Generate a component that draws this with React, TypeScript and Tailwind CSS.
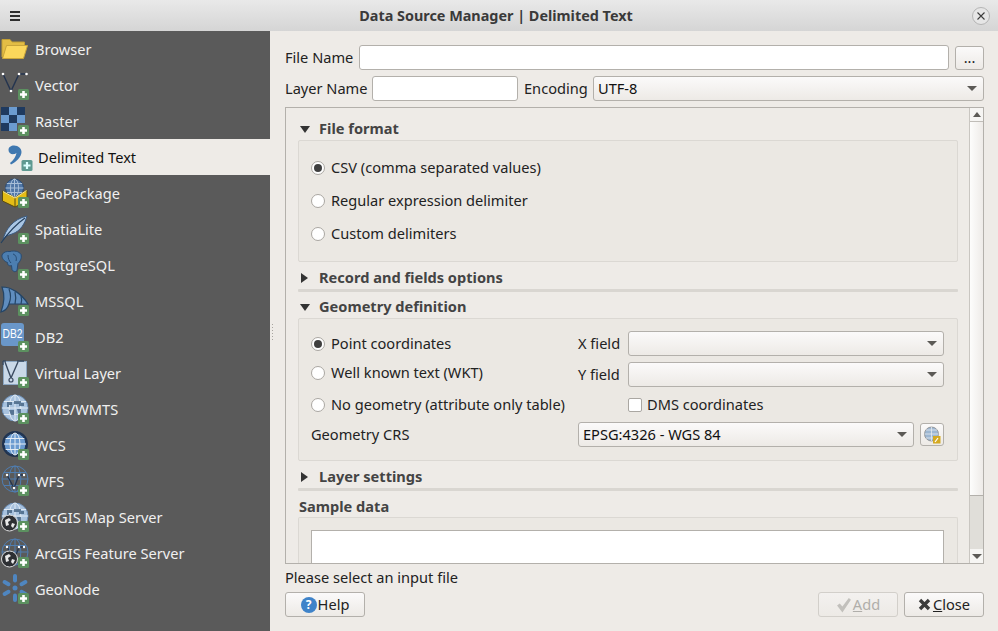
import type { ReactNode } from "react"

const Plus = () => (
  <g>
    <rect x="18" y="22" width="11" height="11" rx="1.5" fill="#5c9160" />
    <path d="M23.5 24v7M20 27.500h7" stroke="#fff" strokeWidth="2.600" />
  </g>
)

const Globe = ({ cx = 15, cy = 17, r = 13, fill = "#7fa3cc", line = "#dfe9f3", edge = "#4a74a8" }) => (
  <g>
    <circle cx={cx} cy={cy} r={r} fill={fill} stroke={edge} strokeWidth="1" />
    <ellipse cx={cx} cy={cy} rx={r * 0.45} ry={r} fill="none" stroke={line} strokeWidth="1" />
    <path d={`M${cx - r} ${cy}h${r * 2}M${cx} ${cy - r}v${r * 2}M${cx - r * 0.85} ${cy - r * 0.5}h${r * 1.7}M${cx - r * 0.85} ${cy + r * 0.5}h${r * 1.7}`} stroke={line} strokeWidth="1" />
  </g>
)

const VShape = () => (
  <g>
    <path d="M7 12l7 13 5-13h5" fill="none" stroke="#24344f" strokeWidth="1.3" />
    <circle cx="7" cy="12" r="1.2" fill="#fff" />
    <circle cx="14" cy="25" r="1.2" fill="#fff" />
    <circle cx="19" cy="12" r="1.2" fill="#fff" />
    <circle cx="24" cy="12" r="1.2" fill="#fff" />
  </g>
)

const MapBlots = () => (
  <path d="M7 11h5v3H9v2H7zM14 10h7v2h3v3h-5v-2h-5zM9 19h5v5h-3zM17 18h4v4h-3z" fill="#41607f" opacity="0.8" />
)

const SmallGlobe = () => (
  <g>
    <circle cx="9.500" cy="24" r="8" fill="#2d2f33" stroke="#ddd" strokeWidth="1" />
    <path d="M5 21l4-2 2 2-3 2 1 3-3 1zM12 24l3 1-2 4-2-2z" fill="#e8e8e8" />
  </g>
)

const icons: Record<string, ReactNode> = {
  Browser: (
    <>
      <path d="M2 26V8.500h8l2 2.500h12.500v4" fill="#e3bd45" stroke="#c29f35" strokeWidth="1" />
      <path d="M2.500 27.500l4-13h21l-4 13z" fill="#fbd75b" stroke="#c9a53a" strokeWidth="1" />
    </>
  ),
  Vector: (
    <>
      <path d="M3 7l8 17 8-17h8" fill="none" stroke="#24344f" strokeWidth="1.400" />
      <circle cx="3" cy="7" r="1.300" fill="#fff" />
      <circle cx="11" cy="24" r="1.300" fill="#fff" />
      <circle cx="19" cy="7" r="1.300" fill="#fff" />
      <circle cx="26.500" cy="7" r="1.300" fill="#fff" />
      <Plus />
    </>
  ),
  Raster: (
    <>
      <path d="M1 4h8v8H1zM17 4h8v8h-8zM9 12h8v8H9zM1 20h8v8H1z" fill="#1f3a5f" />
      <path d="M9 4h8v8H9zM1 12h8v8H1zM17 12h8v8h-8zM9 20h8v8H9z" fill="#6b9bd0" />
      <Plus />
    </>
  ),
  "Delimited Text": (
    <>
      <path d="M5.500 11C5.500 8 8 6.500 11 6.500c4.500 0 7.500 3 7.500 6.500 0 5-5.500 10-10.500 12.500L7 24c3.500-3 6-6.500 6.500-10-1 .8-2.500 1.200-3.500 1.200-2.500 0-4.500-1.700-4.500-4.200z" fill="#3f78b0" />
      <rect x="18.500" y="21" width="11" height="11" rx="1.500" fill="#5f9a91" />
      <path d="M24 23v7M20.500 26.500h7" stroke="#dff" strokeWidth="2.200" />
    </>
  ),
  GeoPackage: (
    <>
      <Globe cx={14.500} cy={13} r={9} fill="#4f76a6" edge="#2b4a73" line="#a8bfd8" />
      <path d="M2.500 16L15 22.500 27 15v11l-12 6-12.500-6z" fill="#e5bd16" stroke="#5a4c10" strokeWidth="1" />
      <path d="M15 22.500V32" stroke="#5a4c10" strokeWidth="1" />
      <path d="M3 16.500l12 6.500 11.500-7.500" fill="none" stroke="#f8ec9d" strokeWidth="1" />
      <Plus />
    </>
  ),
  SpatiaLite: (
    <>
      <path d="M3 29C5 19 13 8 27 5c-2 7-6 15-15 18l-6 2z" fill="#a9c6e4" stroke="#3a5a80" strokeWidth="1" />
      <path d="M1 32C8 22 15 14 25 7" fill="none" stroke="#24405f" strokeWidth="1.200" />
      <Plus />
    </>
  ),
  PostgreSQL: (
    <>
      <path d="M2 8c1-3 5-4 8-3.500 4-1 9-.5 11 3 1 4-1 7-3 9l-1 7c-2 2-4 1-5-1l-.5-4c-3 1-4-1-4-3-3-1-6-4-5.500-7.500z" fill="#4c7eb0" stroke="#274b73" strokeWidth="1" />
      <path d="M8 8c0 3 1 6 3 8M13 7c3 1 4 4 3 7" fill="none" stroke="#274b73" strokeWidth="1" />
      <Plus />
    </>
  ),
  MSSQL: (
    <>
      <path d="M2 4c9 0 19 6 26 17H9c-1 3-4 7-8 8 3-8 4-17 1-25z" fill="#5f8dbe" stroke="#244566" strokeWidth="1.200" />
      <path d="M9 6c2 5 2 10 0 15M15 9c1 4 1 8 0 12M21 13c1 3 1 5 0 8" fill="none" stroke="#244566" strokeWidth="1.200" />
      <Plus />
    </>
  ),
  DB2: (
    <>
      <rect x="1" y="4" width="23" height="23" rx="3" fill="#6a97c9" />
      <text x="2.500" y="19" fontSize="13" fill="#fff" fontFamily="'Liberation Sans',sans-serif" textLength="20" lengthAdjust="spacingAndGlyphs">DB2</text>
      <Plus />
    </>
  ),
  "Virtual Layer": (
    <>
      <rect x="3.500" y="6.500" width="23" height="23" fill="#c9d8e8" stroke="#8ba6c2" strokeWidth="1" />
      <path d="M5 7l6 16 7-16" fill="none" stroke="#39495f" strokeWidth="1.400" />
      <circle cx="11" cy="25" r="2" fill="#c9d8e8" stroke="#39495f" strokeWidth="1.200" />
      <path d="M3 6h3M17 6h7M3 6v4" stroke="#39495f" strokeWidth="1.300" fill="none" />
      <Plus />
    </>
  ),
  "WMS/WMTS": (
    <>
      <Globe fill="#a8c2de" edge="#6d90b8" line="#dfe9f3" />
      <MapBlots />
      <Plus />
    </>
  ),
  WCS: (
    <>
      <circle cx="15" cy="17" r="13" fill="#1f3350" />
      <Globe r={11} fill="#6b9bd0" edge="#1f3350" line="#e5edf5" />
      <Plus />
    </>
  ),
  WFS: (
    <>
      <Globe cy={16} fill="none" line="#4f7db0" edge="#4f7db0" />
      <VShape />
      <Plus />
    </>
  ),
  "ArcGIS Map Server": (
    <>
      <Globe fill="#a8c2de" edge="#6d90b8" />
      <MapBlots />
      <SmallGlobe />
      <Plus />
    </>
  ),
  "ArcGIS Feature Server": (
    <>
      <Globe fill="none" line="#4f7db0" edge="#4f7db0" />
      <VShape />
      <SmallGlobe />
      <Plus />
    </>
  ),
  GeoNode: (
    <>
      <circle cx="15" cy="17" r="2.500" fill="#4f86c0" />
      {[0, 60, 120, 180, 240, 300].map((a) => (
        <rect key={a} x="13" y="3" width="4" height="8.500" rx="2" fill="#4f86c0" transform={`rotate(${a} 15 17)`} />
      ))}
      <Plus />
    </>
  ),
}

const sources = Object.keys(icons)

function SideItem({ name }: { name: string }) {
  const active = name === "Delimited Text"
  return (
    <div className={`flex h-9 items-center ${active ? "bg-[#eeebe7] pl-[3px] text-[#111]" : "text-[#f0f0f0]"}`}>
      <svg width="32" height="36" viewBox="0 0 32 36" className="shrink-0">
        {icons[name]}
      </svg>
      <span className="ml-[3px] whitespace-nowrap">{name}</span>
    </div>
  )
}

const Arrow = ({ className = "" }: { className?: string }) => (
  <span className={`h-0 w-0 border-x-[5px] border-t-[5px] border-x-transparent border-t-[#5c5a56] ${className}`} />
)

function Select({ value, className = "" }: { value?: string; className?: string }) {
  return (
    <div className={`flex h-[25px] items-center justify-between rounded-[3px] border border-[#b3b0ab] bg-linear-to-b from-[#fbfafa] to-[#edeae6] pl-[4px] pr-[6px] text-[#111] ${className}`}>
      <span className="pb-[2px]">{value}</span>
      <Arrow />
    </div>
  )
}

const TextBox = ({ className = "" }: { className?: string }) => (
  <div className={`h-[25px] rounded-[3px] border border-[#b3b0ab] bg-white ${className}`} />
)

function Radio({ label, checked, className = "" }: { label: string; checked?: boolean; className?: string }) {
  return (
    <div className={`flex items-center whitespace-nowrap text-[#222] ${className}`}>
      <span className="flex h-[14px] w-[14px] items-center justify-center rounded-full border border-[#aaa7a2] bg-white">
        {checked && <span className="h-[8px] w-[8px] rounded-full bg-[#3f3f3f]" />}
      </span>
      <span className="ml-[6px] pb-[2px]">{label}</span>
    </div>
  )
}

function SectionHead({ label, open }: { label: string; open?: boolean }) {
  return (
    <div className="flex h-[22px] items-center font-bold text-[#444]">
      <span className="flex w-[21px] justify-start pl-[2px]">
        {open ? (
          <span className="h-0 w-0 border-x-[5.5px] border-t-[7px] border-x-transparent border-t-[#333]" />
        ) : (
          <span className="ml-[1px] h-0 w-0 border-y-[5.5px] border-l-[7px] border-y-transparent border-l-[#333]" />
        )}
      </span>
      <span className="pb-[2px]">{label}</span>
    </div>
  )
}

const Rule = () => <div className="h-[3px] rounded-[1px] bg-[#d9d6d1]" />

function ActionButton({ children, className = "" }: { children: ReactNode; className?: string }) {
  return (
    <div className={`flex h-[25px] w-[80px] items-center justify-center rounded-[3px] border bg-linear-to-b ${className}`}>
      {children}
    </div>
  )
}

function ScrollBar() {
  return (
    <div className="flex w-[14px] shrink-0 flex-col border-l border-[#c9c6c1]">
      <div className="flex h-[14px] items-center justify-center border-b border-[#c0bdb8] bg-[#f6f5f3]">
        <span className="h-0 w-0 border-x-[4.5px] border-b-[5px] border-x-transparent border-b-[#5c5a56]" />
      </div>
      <div className="h-[374px] border-b border-[#b3b0ab] bg-linear-to-r from-[#fdfdfc] to-[#eeebe8]" />
      <div className="flex-1 bg-[#e0ded9]" />
      <div className="flex h-[14px] items-center justify-center bg-[#f6f5f3]">
        <Arrow className="border-x-[4.5px]" />
      </div>
    </div>
  )
}

export default function App() {
  return (
    <div className="flex h-[631px] w-[998px] flex-col overflow-hidden bg-[#eeebe7] font-['Noto_Sans',sans-serif] text-[14.6px] leading-[20px] text-[#222]">
      <div className="flex h-[31px] shrink-0 items-center justify-between bg-linear-to-b from-[#e9e9e9] to-[#d5d5d5] pl-[10px] pr-[8px]">
        <div className="flex w-[10px] flex-col gap-[2px]">
          <span className="h-[2px] bg-[#2e2e2e]" />
          <span className="h-[2px] bg-[#2e2e2e]" />
          <span className="h-[2px] bg-[#2e2e2e]" />
        </div>
        <span className="text-[14.400px] font-bold text-[#3a3a3a]">Data Source Manager | Delimited Text</span>
        <div className="flex h-[18px] w-[18px] items-center justify-center rounded-full border border-[#b5b5b5] bg-[#e6e6e6]">
          <svg width="10" height="10" viewBox="0 0 10 10">
            <path d="M1.500 1.500l7 7M8.500 1.500l-7 7" stroke="#3c3c3c" strokeWidth="1.100" />
          </svg>
        </div>
      </div>

      <div className="flex min-h-0 flex-1">
        <div className="w-[270px] shrink-0 bg-[#5a5a5a]">
          {sources.map((name) => (
            <SideItem key={name} name={name} />
          ))}
        </div>

        <div className="relative flex min-w-0 flex-1 flex-col pl-[15px] pr-[14px] pt-[14px]">
          {/* splitter grip */}
          <div className="absolute left-[2px] top-[293px] flex flex-col gap-[2px]">
            {[0, 1, 2, 3, 4, 5].map((i) => (
              <span key={i} className="h-[1px] w-[1px] bg-[#a8a5a0]" />
            ))}
          </div>

          <div className="flex h-[25px] items-center">
            <span className="w-[74px] whitespace-nowrap pb-[2px]">File Name</span>
            <TextBox className="flex-1" />
            <div className="ml-[6px] flex h-[24px] w-[29px] items-center justify-center rounded-[3px] border border-[#b3b0ab] bg-linear-to-b from-[#fbfafa] to-[#edeae6] pb-[2px]">
              ...
            </div>
          </div>
          <div className="mt-[6px] flex h-[25px] items-center">
            <span className="w-[87px] whitespace-nowrap pb-[2px]">Layer Name</span>
            <TextBox className="w-[146px]" />
            <span className="ml-[6px] w-[69px] pb-[2px]">Encoding</span>
            <Select value="UTF-8" className="flex-1" />
          </div>

          <div className="mt-[6px] flex h-[457px] overflow-hidden border border-[#b3b0ab]">
            <div className="min-w-0 flex-1 pl-[12px] pr-[11px] pt-[10px]">
              <SectionHead label="File format" open />
              <div className="flex h-[122px] flex-col gap-[13px] rounded-[2px] border border-[#dbd8d3] bg-[#ebe8e3] pl-[12px] pt-[17px]">
                <Radio label="CSV (comma separated values)" checked className="h-[20px]" />
                <Radio label="Regular expression delimiter" className="h-[20px]" />
                <Radio label="Custom delimiters" className="h-[20px]" />
              </div>

              <div className="mt-[5px]">
                <SectionHead label="Record and fields options" />
                <Rule />
              </div>

              <div className="mt-[4px]">
                <SectionHead label="Geometry definition" open />
                <div className="grid h-[143px] grid-cols-[267px_50px_316px] grid-rows-[25px_25px_23px_25px] items-center gap-y-[6px] rounded-[2px] border border-[#dbd8d3] bg-[#ebe8e3] pl-[12px] pt-[12px]">
                  <Radio label="Point coordinates" checked />
                  <span className="pb-[2px]">X field</span>
                  <Select />
                  <Radio label="Well known text (WKT)" className="pb-[3px]" />
                  <span className="pb-[2px]">Y field</span>
                  <Select />
                  <Radio label="No geometry (attribute only table)" />
                  <span />
                  <div className="flex items-center">
                    <span className="h-[14px] w-[14px] rounded-[2px] border border-[#aaa7a2] bg-white" />
                    <span className="ml-[5px] pb-[2px]">DMS coordinates</span>
                  </div>
                  <span className="pb-[2px]">Geometry CRS</span>
                  <div className="col-span-2 flex items-center gap-[6px]">
                    <Select value="EPSG:4326 - WGS 84" className="flex-1" />
                    <div className="flex h-[23px] w-[24px] items-center justify-center rounded-[3px] border border-[#b3b0ab] bg-linear-to-b from-[#fbfafa] to-[#edeae6]">
                      <svg width="18" height="18" viewBox="0 0 18 18">
                        <circle cx="8.500" cy="8" r="7" fill="#9db7d2" stroke="#8a8a8a" strokeWidth="0.800" />
                        <path d="M1.500 8h14M8.500 1v14M3 4h11M3 12h11" stroke="#e6ebf0" strokeWidth="0.800" />
                        <rect x="10" y="10" width="7.500" height="7.500" fill="#d4a922" />
                        <path d="M12 16l3-4" stroke="#fff" strokeWidth="1.200" />
                      </svg>
                    </div>
                  </div>
                </div>
              </div>

              <div className="mt-[5px]">
                <SectionHead label="Layer settings" />
                <Rule />
              </div>

              <div className="mt-[5px] flex h-[21px] items-center pb-[2px] pl-[1px] font-bold text-[#444]">Sample data</div>
              <div className="rounded-t-[2px] border-x border-t border-[#dbd8d3] bg-[#ebe8e3] pl-[12px] pr-[13px] pt-[12px]">
                <div className="h-[60px] border border-[#b3b0ab] bg-white" />
              </div>
            </div>
            <ScrollBar />
          </div>

          <div className="mt-[3px] flex h-[20px] items-center">Please select an input file</div>

          <div className="mt-[5px] flex justify-between">
            <ActionButton className="border-[#b3b0ab] from-[#fbfafa] to-[#edeae6]">
              <span className="mr-[1px] flex h-[16px] w-[16px] items-center justify-center rounded-full bg-[#3f83c9] text-[12px] font-bold text-white">?</span>
              <span className="pb-[2px]">Help</span>
            </ActionButton>
            <div className="flex gap-[6px]">
              <ActionButton className="border-[#d2cfca] from-[#f3f1ef] to-[#edeae6] text-[#b0aeaa]">
                <svg width="16" height="16" viewBox="0 0 15 15">
                  <path d="M1 8l2.500-2 2.500 3 6-8 2 1.500L6 14.500z" fill="#c2c0bc" />
                </svg>
                <span className="ml-[1px] pb-[2px]"><span className="underline">A</span>dd</span>
              </ActionButton>
              <ActionButton className="border-[#b3b0ab] from-[#fbfafa] to-[#edeae6]">
                <svg width="13" height="13" viewBox="0 0 13 13">
                  <path d="M2 2l9 9M11 2l-9 9" stroke="#3c3c3c" strokeWidth="3.400" />
                </svg>
                <span className="ml-[2px] pb-[2px]"><span className="underline">C</span>lose</span>
              </ActionButton>
            </div>
          </div>
        </div>
      </div>
    </div>
  )
}
